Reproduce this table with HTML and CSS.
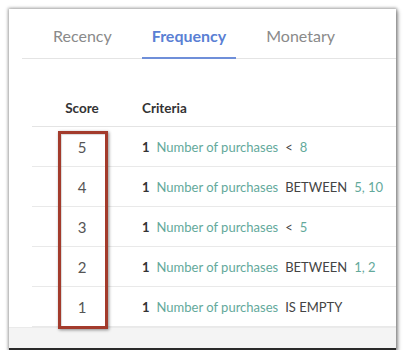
FILE: index.html
```html
<!DOCTYPE html>
<html>
<head>
<meta charset="utf-8">
<link rel="stylesheet" href="styles.css">
</head>
<body>
<div class="card">
  <div class="tabs">
    <div class="tab">Recency</div>
    <div class="tab active">Frequency</div>
    <div class="tab">Monetary</div>
  </div>
  <div class="table">
    <div class="row head">
      <div class="score">Score</div>
      <div class="criteria">Criteria</div>
    </div>
    <div class="row">
      <div class="score">5</div>
      <div class="criteria"><span class="num">1</span><span class="field">Number of purchases</span><span class="op">&lt;</span><span class="val">8</span></div>
    </div>
    <div class="row">
      <div class="score">4</div>
      <div class="criteria"><span class="num">1</span><span class="field">Number of purchases</span><span class="op">BETWEEN</span><span class="val">5, 10</span></div>
    </div>
    <div class="row">
      <div class="score">3</div>
      <div class="criteria"><span class="num">1</span><span class="field">Number of purchases</span><span class="op">&lt;</span><span class="val">5</span></div>
    </div>
    <div class="row">
      <div class="score">2</div>
      <div class="criteria"><span class="num">1</span><span class="field">Number of purchases</span><span class="op">BETWEEN</span><span class="val">1, 2</span></div>
    </div>
    <div class="row">
      <div class="score">1</div>
      <div class="criteria"><span class="num">1</span><span class="field">Number of purchases</span><span class="op">IS EMPTY</span></div>
    </div>
    <div class="highlight"></div>
  </div>
  <div class="footer"></div>
</div>
</body>
</html>
```

FILE: styles.css
```css
html, body {
  margin: 0;
  padding: 0;
  background: #fff;
}
body {
  padding: 9px 0 0 9px;
  font-family: Lato, "Open Sans", sans-serif;
}
.card {
  width: 387px;
  height: 339px;
  background: #fff;
  border-bottom: 2px solid #2a2a2a;
  box-shadow: 0 0 3px 1px rgba(0,0,0,0.35), 2px 2px 4px rgba(0,0,0,0.3);
  display: flex;
  flex-direction: column;
  overflow: hidden;
}
.tabs {
  display: flex;
  gap: 20px;
  margin-left: 13px;
  padding-left: 21px;
  height: 50px;
  border-bottom: 1px solid #e4e4e4;
  align-items: stretch;
}
.tab {
  padding: 5px 10px 0;
  font-size: 16px;
  color: #8a8a8a;
  display: flex;
  align-items: center;
  border-bottom: 2px solid transparent;
  margin-bottom: -1px;
}
.tab.active {
  color: #5a7fd4;
  font-weight: 700;
  border-bottom-color: #6f8fd9;
}
.table {
  position: relative;
  margin-left: 23px;
  margin-top: 29px;
}
.row {
  display: flex;
  align-items: center;
  height: 38px;
  border-bottom: 1px solid #e9e9e9;
  padding-top: 1px;
}
.row.head {
  height: 37px;
  border-bottom-color: #e4e4e4;
}
.score {
  width: 100px;
  text-align: center;
  font-size: 15px;
  color: #555;
}
.head .score, .head .criteria {
  font-size: 13.5px;
  font-weight: 700;
  color: #333;
}
.criteria {
  padding-left: 10px;
  font-size: 13px;
  color: #444;
  display: flex;
  gap: 7px;
}
.num {
  color: #333;
  font-weight: 700;
}
.field, .val {
  color: #63a99b;
}
.op {
  color: #444;
}
.highlight {
  position: absolute;
  left: 26px;
  top: 43px;
  width: 44px;
  height: 192px;
  border: 3px solid #a33b2c;
  box-shadow: 1px 1px 3px rgba(0,0,0,0.45), inset 1px 1px 1px rgba(0,0,0,0.15);
}
.footer {
  margin-top: auto;
  height: 20px;
  background: #f4f4f4;
  border-top: 1px solid #eaeaea;
}
```
